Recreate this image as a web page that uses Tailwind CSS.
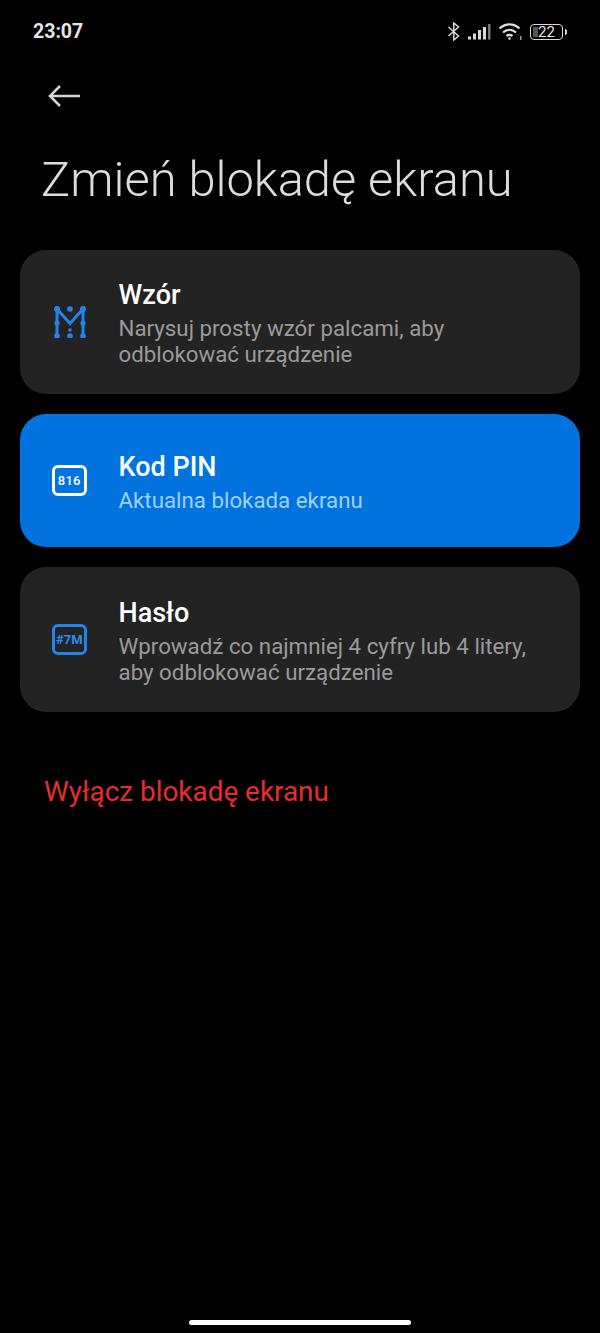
<!DOCTYPE html>
<html lang="pl">
<head>
    <meta charset="UTF-8">
    <meta name="viewport" content="width=device-width, initial-scale=1.0">
    <title>Zmień blokadę ekranu</title>
    <script src="https://cdn.jsdelivr.net/npm/@tailwindcss/browser@4"></script>
</head>
<body class="bg-black">
<div class="w-[600px] h-[1333px] bg-black flex flex-col font-['Roboto',sans-serif] overflow-hidden">

    <!-- Status bar -->
    <div class="h-[64px] pl-[33px] pr-[33px] pt-[21px] flex justify-between items-start">
        <span class="text-[19.500px] leading-[21px] font-bold text-[#e6e6e6]">23:07</span>
        <div class="flex items-center gap-[7px] h-[21px]">
            <svg width="14" height="19" viewBox="0 0 14 19" fill="none" stroke="#d8d8d8" stroke-width="1.5"><path d="M1.5 5l10 9-4.7 4V1l4.7 4-10 9"/></svg>
            <svg width="23" height="16" viewBox="0 0 23 16" fill="#d8d8d8"><rect x="0" y="12.5" width="3" height="3"/><rect x="5" y="9.5" width="3" height="6"/><rect x="10" y="6" width="3" height="9.5"/><rect x="15" y="3" width="3" height="12.5"/><rect x="20" y="0" width="2.5" height="15.5" fill="#777"/></svg>
            <svg width="25" height="19" viewBox="0 0 25 19" fill="none" stroke="#e0e0e0" stroke-width="2.2"><path d="M1.5 6.500c6-5.500 14-5.500 20 0"/><path d="M5 10.500c4-3.500 9-3.500 13 0"/><path d="M8.500 14c2-1.500 4-1.500 6 0"/><circle cx="11.500" cy="16.500" r="1.300" fill="#e0e0e0" stroke="none"/><rect x="22" y="14" width="1.500" height="4" fill="#999" stroke="none"/></svg>
            <div class="flex items-center gap-[2px]">
                <div class="relative w-[33px] h-[16px] rounded-[4px] border border-[#d8d8d8] flex items-center justify-center">
                    <div class="absolute left-[2px] top-[2px] bottom-[2px] w-[5px] bg-[#555]"></div>
                    <span class="relative text-[15px] leading-[14px] text-[#e6e6e6]">22</span>
                </div>
                <div class="w-[2px] h-[6px] bg-[#d8d8d8] rounded-r-sm"></div>
            </div>
        </div>
    </div>

    <!-- Back arrow -->
    <div class="pl-[48px] h-[36px] flex items-center mt-[14px]">
        <svg width="33" height="24" viewBox="0 0 33 24" fill="none" stroke="#d6d6d6" stroke-width="2.500"><path d="M32 12H2"/><path d="M12 2L2 12l10 10"/></svg>
    </div>

    <h1 class="mt-[38px] pl-[41px] text-[48.800px] leading-[56px] font-light text-[#dcdcdc]">Zmień blokadę ekranu</h1>

    <!-- Options -->
    <div class="mt-[42px] px-[20px] flex flex-col gap-[20px]">
        <div class="h-[144px] rounded-[26px] bg-[#232323] flex items-center">
            <div class="w-[98.500px] flex justify-center pl-[2px]">
                <svg width="34" height="32" viewBox="0 0 34 32" fill="none" stroke="#2284ea" stroke-width="3">
                    <path d="M4 30V3l13 14.500L30 3v27"/>
                    <g fill="#2284ea" stroke="none">
                        <circle cx="4" cy="3" r="3"/><circle cx="30" cy="3" r="3"/><circle cx="17" cy="3" r="2.800"/>
                        <circle cx="4" cy="17" r="2.600"/><circle cx="30" cy="17" r="2.600"/>
                        <circle cx="4" cy="30" r="2.800"/><circle cx="30" cy="30" r="2.800"/><circle cx="17" cy="30" r="2.800"/>
                        <circle cx="17" cy="24" r="1.800"/>
                    </g>
                </svg>
            </div>
            <div class="pt-[3px]">
                <div class="text-[27px] leading-[30px] font-medium text-white">Wzór</div>
                <p class="mt-[5px] text-[22.300px] leading-[26px] text-[#9a9a9a]">Narysuj prosty wzór palcami, aby<br>odblokować urządzenie</p>
            </div>
        </div>

        <div class="h-[133px] rounded-[26px] bg-[#0073de] flex items-center">
            <div class="w-[98.500px] flex justify-center">
                <div class="w-[35px] h-[31px] rounded-[6px] border-[3px] border-white flex items-center justify-center text-[13px] font-medium text-white tracking-[0.3px]">816</div>
            </div>
            <div class="pt-[3px]">
                <div class="text-[27px] leading-[30px] font-medium text-white">Kod PIN</div>
                <p class="mt-[5px] text-[22.300px] leading-[26px] text-[#9fd0fb]">Aktualna blokada ekranu</p>
            </div>
        </div>

        <div class="h-[145px] rounded-[26px] bg-[#232323] flex items-center">
            <div class="w-[98.500px] flex justify-center">
                <div class="w-[35px] h-[31px] rounded-[6px] border-[3px] border-[#2284ea] flex items-center justify-center text-[13px] font-bold text-[#2a8cf0]">#7M</div>
            </div>
            <div class="pt-[3px]">
                <div class="text-[27px] leading-[30px] font-medium text-white">Hasło</div>
                <p class="mt-[5px] text-[22.300px] leading-[26px] text-[#9a9a9a]">Wprowadź co najmniej 4 cyfry lub 4 litery,<br>aby odblokować urządzenie</p>
            </div>
        </div>
    </div>

    <div class="mt-[64px] pl-[44px] text-[27.900px] leading-[32px] text-[#e62e2e]">Wyłącz blokadę ekranu</div>

    <!-- Home indicator -->
    <div class="mt-auto mb-[8px] mx-auto w-[222px] h-[5px] rounded-full bg-white"></div>
</div>
</body>
</html>
